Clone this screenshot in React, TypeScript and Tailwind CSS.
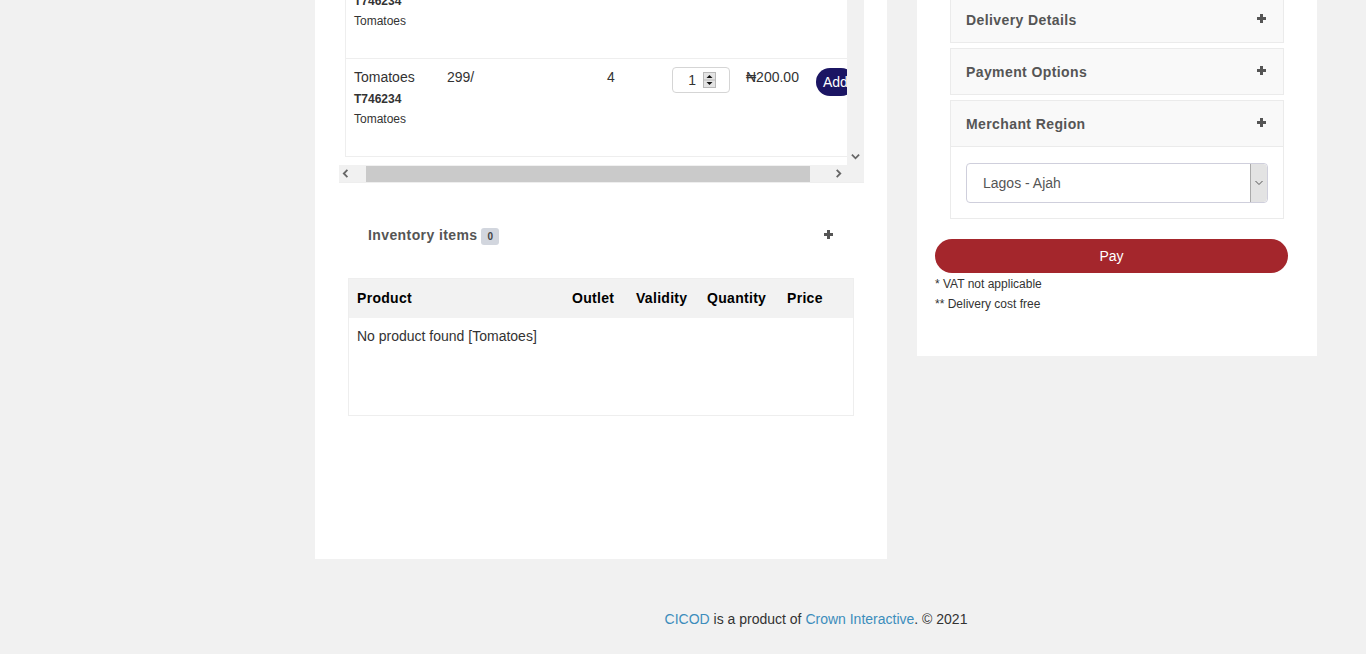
import React from "react";

const Plus = () => (
  <svg width="9" height="9" viewBox="0 0 9 9" className="fill-[#555]">
    <rect x="3" y="0" width="3" height="9" />
    <rect x="0" y="3" width="9" height="3" />
  </svg>
);

const Chevron = ({ dir }: { dir: "left" | "right" | "down" }) => {
  const d =
    dir === "left" ? "M6 1 L2 5 L6 9" : dir === "right" ? "M3 1 L7 5 L3 9" : "M1 3 L5 7 L9 3";
  return (
    <svg width="9" height="9" viewBox="0 0 10 10">
      <path d={d} fill="none" stroke="#666" strokeWidth="2" />
    </svg>
  );
};

const Spinner = () => (
  <svg width="13" height="16" viewBox="0 0 13 16">
    <rect x="0.5" y="0.5" width="12" height="15" fill="#e4e4e4" stroke="#b8b8b8" />
    <line x1="1" y1="8" x2="12" y2="8" stroke="#b8b8b8" />
    <path d="M3.5 6 L6.5 3 L9.5 6 Z" fill="#111" />
    <path d="M3.5 10 L6.5 13 L9.5 10 Z" fill="#111" />
  </svg>
);

const ProductRow = () => (
  <div className="flex h-[98px] border-b border-[#eeeeee] text-[14px] leading-5 text-[#333]">
    <div className="w-[93px] pl-2 pt-2">
      <p>Tomatoes</p>
      <p className="mt-[2px] text-[12px] font-bold">T746234</p>
      <p className="text-[12px]">Tomatoes</p>
    </div>
    <div className="w-[160px] pl-2 pt-2">299/</div>
    <div className="w-[65px] pl-2 pt-2">4</div>
    <div className="w-[74px] pl-2 pt-2">
      <div className="flex h-[26px] w-[58px] items-center justify-end gap-[7px] rounded border border-[#d5d5d5] pr-[13px]">
        <span>1</span>
        <Spinner />
      </div>
    </div>
    <div className="w-[70px] pl-2 pt-2">₦200.00</div>
    <div className="pl-2 pt-[9px]">
      <button className="h-7 rounded-full bg-[#1b1563] px-[7px] text-[14px] text-white">Add</button>
    </div>
  </div>
);

const AccordionHead = ({ label }: { label: string }) => (
  <div className="flex h-[45px] items-center justify-between bg-[#f9f9f9] pl-[15px] pr-[17px]">
    <p className="pt-[2px] text-[14px] font-bold tracking-[0.4px] text-[#555]">{label}</p>
    <div className="-mt-[3px]">
      <Plus />
    </div>
  </div>
);

const App = () => {
  return (
    <div className="min-h-screen overflow-hidden bg-[#f1f1f1] font-['Liberation_Sans',Arial,sans-serif]">
      <div className="-mt-[39px] ml-[315px] flex w-[1002px] items-start gap-[30px]">
        {/* left panel */}
        <div className="h-[598px] w-[572px] bg-white pl-[24px]">
          <div className="w-[525px] border-b border-[#eeeeee]">
            <div className="flex h-[204px]">
              <div className="w-[508px] overflow-hidden pl-[6px]">
                <div className="w-[700px] border-l border-[#eeeeee]">
                  <ProductRow />
                  <ProductRow />
                </div>
              </div>
              <div className="flex w-[17px] flex-col items-center justify-end bg-[#f1f1f1] pb-[4px]">
                <Chevron dir="down" />
              </div>
            </div>
            <div className="flex h-[17px]">
              <div className="flex w-[508px] items-center bg-[#f1f1f1]">
                <div className="flex w-[27px] pl-[3px]">
                  <Chevron dir="left" />
                </div>
                <div className="h-[16px] w-[444px] bg-[#cacaca]" />
                <div className="flex flex-1 justify-end pr-[4px]">
                  <Chevron dir="right" />
                </div>
              </div>
              <div className="w-[17px] bg-[#f1f1f1]" />
            </div>
          </div>

          <div className="mt-[42px] flex items-center justify-between pl-[29px] pr-[54px]">
            <div className="flex items-center gap-1">
              <p className="text-[14px] font-bold tracking-[0.4px] text-[#555]">Inventory items</p>
              <span className="mt-[2px] rounded-[3px] bg-[#d2d6de] px-[6px] py-[2px] text-[10px] font-bold leading-[13px] text-[#444]">
                0
              </span>
            </div>
            <div className="-mt-[2px]">
              <Plus />
            </div>
          </div>

          <div className="ml-[9px] mt-[32px] h-[138px] w-[506px] border border-[#eeeeee]">
            <div className="flex h-[39px] items-center bg-[#f2f2f2] pb-[1px] text-[14px] font-bold tracking-[0.3px] text-black">
              <div className="w-[215px] pl-2">Product</div>
              <div className="w-[64px] pl-2">Outlet</div>
              <div className="w-[71px] pl-2">Validity</div>
              <div className="w-[80px] pl-2">Quantity</div>
              <div className="pl-2">Price</div>
            </div>
            <p className="pl-2 pt-[8px] text-[14px] leading-5 text-[#333]">No product found [Tomatoes]</p>
          </div>
        </div>

        {/* right panel */}
        <div className="h-[395px] w-[400px] bg-white px-[18px] pt-[35px]">
          <div className="mx-[15px] flex w-[334px] flex-col gap-[5px]">
            <div className="border border-[#ebebeb]">
              <AccordionHead label="Delivery Details" />
            </div>
            <div className="border border-[#ebebeb]">
              <AccordionHead label="Payment Options" />
            </div>
            <div className="border border-[#ebebeb]">
              <div className="border-b border-[#ebebeb]">
                <AccordionHead label="Merchant Region" />
              </div>
              <div className="px-[15px] pb-[15px] pt-[16px]">
                <div className="flex h-10 items-stretch overflow-hidden rounded border border-[#cfcfdc]">
                  <p className="flex flex-1 items-center pl-4 text-[14px] text-[#555]">Lagos - Ajah</p>
                  <div className="flex w-[17px] items-center justify-center rounded-r border-l border-[#aaa] bg-[#e3e3e3]">
                    <svg width="8" height="6" viewBox="0 0 8 6">
                      <path d="M0.5 1 L4 4.5 L7.5 1" fill="none" stroke="#555" strokeWidth="1" />
                    </svg>
                  </div>
                </div>
              </div>
            </div>
          </div>

          <button className="mt-[20px] h-[34px] w-[353px] rounded-full bg-[#a4262c] text-[14px] text-white">
            Pay
          </button>
          <div className="mt-[1px] text-[12px] leading-5 text-[#333]">
            <p>* VAT not applicable</p>
            <p>** Delivery cost free</p>
          </div>
        </div>
      </div>

      <footer className="ml-[315px] mt-[50px] w-[1002px] text-center text-[14px] leading-5 text-[#333]">
        <span className="text-[#3c8dbc]">CICOD</span> is a product of{" "}
        <span className="text-[#3c8dbc]">Crown Interactive</span>. © 2021
      </footer>
    </div>
  );
};

export default App;
